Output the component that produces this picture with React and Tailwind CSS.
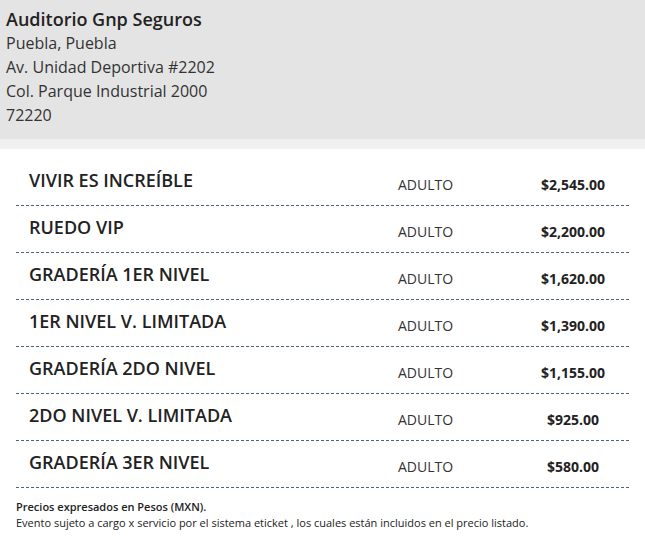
const venue = {
    name: "Auditorio Gnp Seguros",
    lines: ["Puebla, Puebla", "Av. Unidad Deportiva #2202", "Col. Parque Industrial 2000", "72220"],
};

const zones = [
    { name: "VIVIR ES INCREÍBLE", type: "ADULTO", price: "$2,545.00" },
    { name: "RUEDO VIP", type: "ADULTO", price: "$2,200.00" },
    { name: "GRADERÍA 1ER NIVEL", type: "ADULTO", price: "$1,620.00" },
    { name: "1ER NIVEL V. LIMITADA", type: "ADULTO", price: "$1,390.00" },
    { name: "GRADERÍA 2DO NIVEL", type: "ADULTO", price: "$1,155.00" },
    { name: "2DO NIVEL V. LIMITADA", type: "ADULTO", price: "$925.00" },
    { name: "GRADERÍA 3ER NIVEL", type: "ADULTO", price: "$580.00" },
];

const App = () => {
    return (
        <div className="w-[645px] min-h-[541px] bg-white font-['Open_Sans',sans-serif] text-[#333]">
            {/* Venue header */}
            <div className="bg-[#e4e4e4] px-[6px] pt-[7px] pb-[12px]">
                <h1 className="text-[18px] leading-[24px] font-semibold text-[#222]">{venue.name}</h1>
                {venue.lines.map((line) => (
                    <p key={line} className="text-[16px] leading-[24px]">
                        {line}
                    </p>
                ))}
            </div>
            <div className="h-[10px] bg-[#f0f0f0]"></div>

            {/* Price list */}
            <div className="px-[16px] pt-[10px]">
                {zones.map((z) => (
                    <div
                        key={z.name}
                        className="grid grid-cols-[382px_122px_106px] h-[47px] border-b border-dashed border-[#4b6577]"
                    >
                        <div className="pl-[13px] pt-[10px] text-[18px] leading-[23px] font-semibold text-[#222]">
                            {z.name}
                        </div>
                        <div className="pt-[16px] text-[14px] leading-[20px] text-[#333]">{z.type}</div>
                        <div className="pt-[17px] text-center text-[14px] leading-[18px] font-bold text-[#222]">
                            {z.price}
                        </div>
                    </div>
                ))}

                <div className="pt-[11px] text-[11px] leading-[16px] text-[#222]">
                    <p className="font-semibold">Precios expresados en Pesos (MXN).</p>
                    <p>Evento sujeto a cargo x servicio por el sistema eticket , los cuales están incluidos en el precio listado.</p>
                </div>
            </div>
        </div>
    );
};

export default App;
